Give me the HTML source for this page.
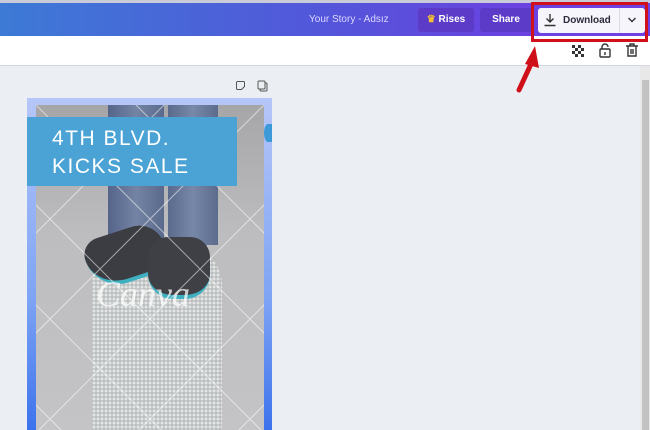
<!DOCTYPE html>
<html><head><style>
*{margin:0;padding:0;box-sizing:border-box}
html,body{width:650px;height:430px;overflow:hidden}
body{background:#ebeef2;font-family:"Liberation Sans",sans-serif;position:relative}
.abs{position:absolute}
</style></head><body>
<div class="abs" style="left:0;top:0;width:650px;height:3px;background:#c9ccd8"></div>
<div class="abs" style="left:0;top:3px;width:650px;height:33px;background:linear-gradient(90deg,#3d7ad6,#5356da 50%,#6a42e0 80%,#7040e4)"></div>
<div class="abs" style="left:0;top:36px;width:650px;height:30px;background:#fff;border-bottom:1px solid #d4d7dd"></div>
<div class="abs" style="left:309px;top:14px;color:#dcd8ff;font-size:10px">Your Story - Adsız</div>
<div class="abs" style="left:418px;top:8px;width:56px;height:24px;background:#5b3bc8;border-radius:3px;color:#fff;font-size:10px;font-weight:bold;line-height:24px;text-align:center"><span style="color:#f5c030">♛</span> Rises</div>
<div class="abs" style="left:480px;top:8px;width:52px;height:24px;background:#5b3bc8;border-radius:3px;color:#fff;font-size:10px;font-weight:bold;line-height:24px;text-align:center">Share</div>
<div class="abs" style="left:531px;top:2px;width:117px;height:40px;border:3px solid #d0101a"></div>
<div class="abs" style="left:538px;top:8px;width:107px;height:25px;background:#f6f5fb;border-radius:3px"></div>
<div class="abs" style="left:619px;top:8px;width:1px;height:25px;background:#ddd"></div>
<svg class="abs" style="left:543px;top:13px" width="14" height="14" viewBox="0 0 14 14"><path d="M7 1v8M3.5 5.5L7 9l3.5-3.5M1.5 12.5h11" stroke="#333" stroke-width="1.4" fill="none"/></svg>
<div class="abs" style="left:563px;top:15px;font-size:10px;font-weight:bold;color:#2a2a3a">Download</div>
<svg class="abs" style="left:627px;top:16px" width="10" height="8"><path d="M1.5 2l3.5 3.5L8.5 2" stroke="#333" stroke-width="1.4" fill="none"/></svg>
<svg class="abs" style="left:512px;top:40px" width="30" height="55"><path d="M7 50L19 24" stroke="#d01018" stroke-width="5" stroke-linecap="round"/><path d="M13 24L23 6 27 28Z" fill="#d01018"/></svg>
<svg class="abs" style="left:571px;top:44px" width="14" height="14"><g fill="#333"><rect x="1" y="1" width="3" height="3"/><rect x="7" y="1" width="3" height="3"/><rect x="4" y="4" width="3" height="3"/><rect x="10" y="4" width="3" height="3"/><rect x="1" y="7" width="3" height="3"/><rect x="7" y="7" width="3" height="3"/><rect x="4" y="10" width="3" height="3"/><rect x="10" y="10" width="3" height="3"/></g></svg>
<svg class="abs" style="left:598px;top:43px" width="14" height="16"><path d="M4 6V4a3 3 0 0 1 6 0" stroke="#333" stroke-width="1.4" fill="none"/><rect x="2" y="6" width="10" height="8" rx="1" stroke="#333" stroke-width="1.4" fill="none"/><path d="M7 9v3" stroke="#333" stroke-width="1.4"/></svg>
<svg class="abs" style="left:625px;top:43px" width="14" height="16"><path d="M1 3h12M5 3V1h4v2M3 3v10h8V3M6 6v5M8 6v5" stroke="#333" stroke-width="1.4" fill="none"/></svg>
<div class="abs" style="left:640px;top:66px;width:10px;height:364px;background:#e8e8e8"></div>
<div class="abs" style="left:642px;top:80px;width:7px;height:350px;background:#c2c2c2"></div>
<svg class="abs" style="left:235px;top:80px" width="36" height="12"><path d="M1.5 2.5a1 1 0 0 1 1-1h6a1 1 0 0 1 1 1v4l-3 3h-4a1 1 0 0 1-1-1z" stroke="#555" fill="none"/><rect x="25" y="3" width="7" height="8" rx="1" stroke="#555" fill="none"/><rect x="23" y="1" width="7" height="8" rx="1" stroke="#555" fill="#ebeef2"/></svg>
<div class="abs" style="left:27px;top:98px;width:245px;height:332px;background:linear-gradient(180deg,#b6c6f8,#7ea4f4 60%,#3c72ec)"></div>
<div class="abs" style="left:36px;top:105px;width:228px;height:325px;background:linear-gradient(180deg,#a6a6a8,#bdbdbf 40%,#c4c4c6);overflow:hidden">
 <div class="abs" style="left:72px;top:0;width:56px;height:135px;background:linear-gradient(90deg,#55648a,#7484a4 50%,#5a6a8c)"></div>
 <div class="abs" style="left:132px;top:0;width:50px;height:140px;background:linear-gradient(90deg,#5a6a8c,#7888a8 50%,#5c6b8c)"></div>
 <div class="abs" style="left:56px;top:140px;width:130px;height:190px;background:radial-gradient(circle,#e4e6e6 1px,#b8bcbc 2px) 0 0/4px 4px,#d2d6d6;border-radius:40px 40px 0 0"></div>
 <div class="abs" style="left:50px;top:125px;width:80px;height:52px;background:#3b3d42;border-radius:20px 30px 10px 40px;border-bottom:4px solid #3fb0c0;transform:rotate(-18deg)"></div>
 <div class="abs" style="left:112px;top:132px;width:62px;height:62px;background:#3e4046;border-radius:20px 20px 25px 25px;border-bottom:4px solid #3fb0c0"></div>
 <div class="abs" style="left:60px;top:168px;font-family:'Liberation Serif',serif;font-style:italic;font-size:36px;color:rgba(255,255,255,.75)">Canva</div>
 <svg class="abs" style="left:0;top:0" width="228" height="325"><g stroke="rgba(255,255,255,.55)" stroke-width="1"><path d="M-200 0L200 400M-100 0L300 400M0 0L400 400M100 0L500 400M-300 0L100 400M228 0L-172 400M128 0L-272 400M328 0L-72 400M428 0L28 400M528 0L128 400"/></g></svg>
</div>
<div class="abs" style="left:27px;top:117px;width:210px;height:69px;background:#4aa3d4"></div>
<div class="abs" style="left:52px;top:125px;color:#fff;font-size:21px;line-height:28px;letter-spacing:1.5px">4TH BLVD.<br>KICKS SALE</div>
<div class="abs" style="left:264px;top:124px;width:8px;height:18px;background:#3c9ad8;border-radius:50% 0 0 50%"></div>
</body></html>
